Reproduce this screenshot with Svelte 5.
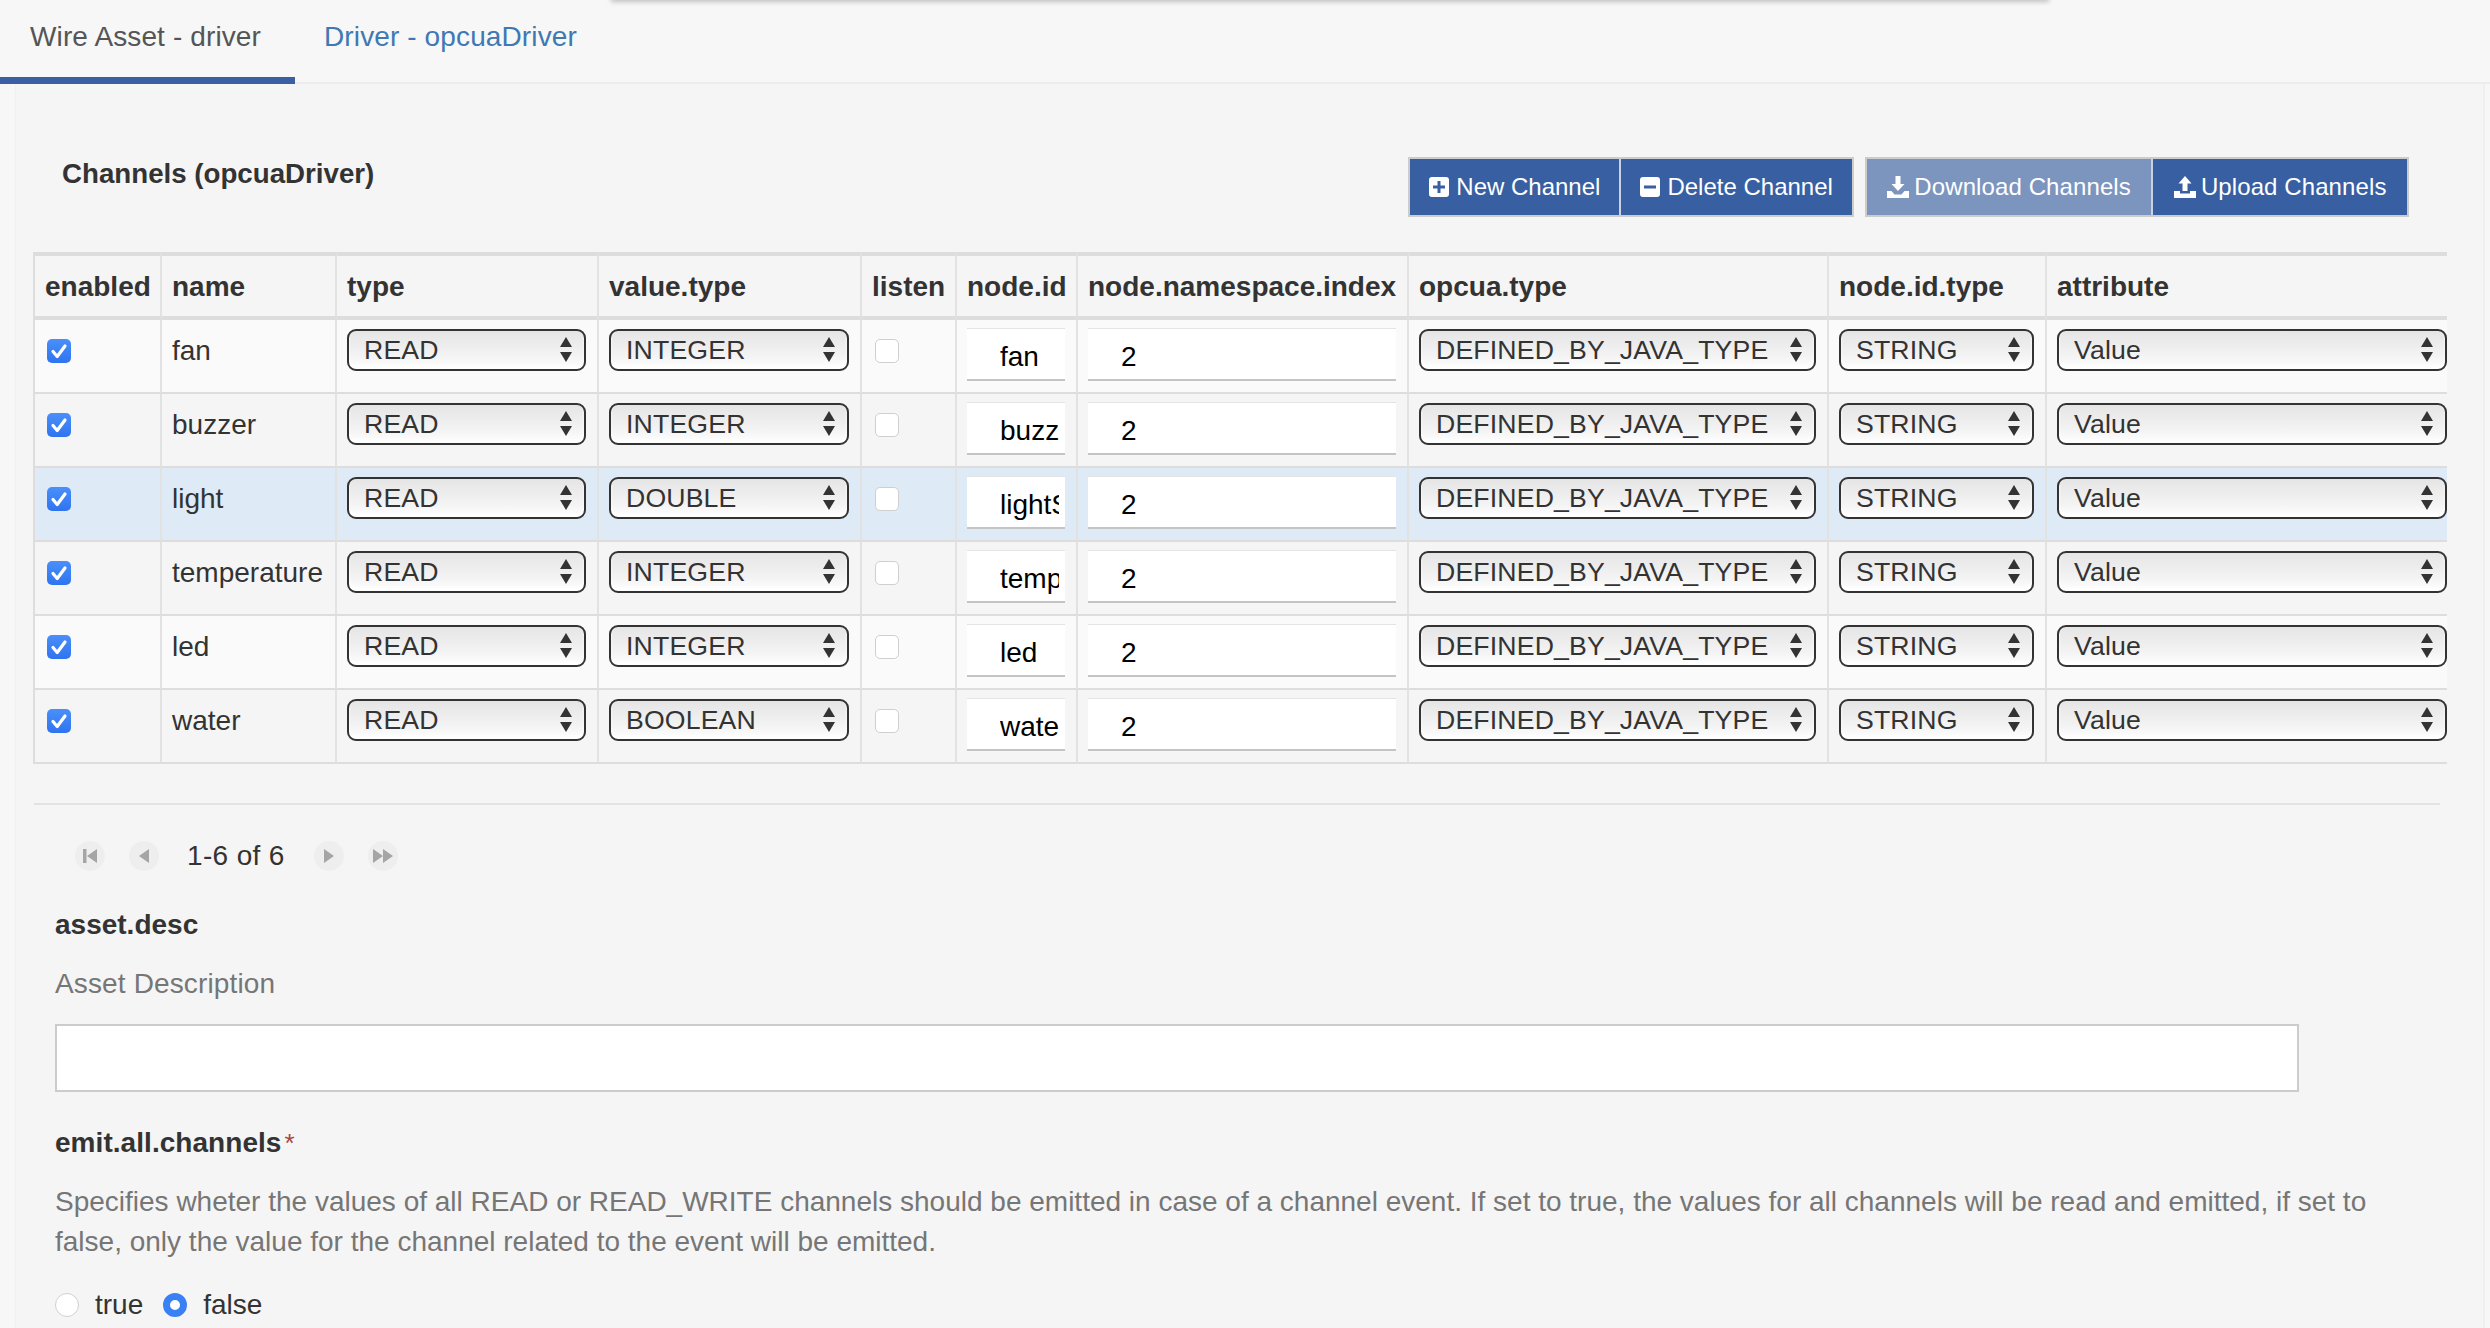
<script lang="ts">
	const columns = ['enabled', 'name', 'type', 'value.type', 'listen', 'node.id', 'node.namespace.index', 'opcua.type', 'node.id.type', 'attribute'];
	const widths = [129, 175, 262, 263, 95, 121, 331, 420, 218, 400];

	const channels = [
		{ name: 'fan', valueType: 'INTEGER', nodeId: 'fan' },
		{ name: 'buzzer', valueType: 'INTEGER', nodeId: 'buzzer' },
		{ name: 'light', valueType: 'DOUBLE', nodeId: 'lightSensor', selected: true },
		{ name: 'temperature', valueType: 'INTEGER', nodeId: 'temperature' },
		{ name: 'led', valueType: 'INTEGER', nodeId: 'led' },
		{ name: 'water', valueType: 'BOOLEAN', nodeId: 'water' }
	];
</script>

{#snippet selectBox(value: string)}
	<div class="select">
		<span>{value}</span>
		<svg class="arrows" viewBox="0 0 14 25" width="14" height="25">
			<path d="M7 0l6 10H1z" />
			<path d="M1 15h12l-6 10z" />
		</svg>
	</div>
{/snippet}

<div class="page">
	<div class="popup-edge"></div>

	<nav class="tabs">
		<div class="tab active">Wire Asset - driver</div>
		<div class="tab">Driver - opcuaDriver</div>
	</nav>

	<main class="panel">
		<div class="toolbar">
			<h2>Channels (opcuaDriver)</h2>
			<div class="actions">
				<div class="btn-group">
					<div class="btn">
						<svg viewBox="0 0 20 20" width="20" height="20"><path fill-rule="evenodd" d="M3 0h14a3 3 0 0 1 3 3v14a3 3 0 0 1-3 3H3a3 3 0 0 1-3-3V3a3 3 0 0 1 3-3zm5.500 4v4.500H4v3h4.500V16h3v-4.500H16v-3h-4.500V4z" /></svg>
						New Channel
					</div>
					<div class="btn">
						<svg viewBox="0 0 20 20" width="20" height="20"><path fill-rule="evenodd" d="M3 0h14a3 3 0 0 1 3 3v14a3 3 0 0 1-3 3H3a3 3 0 0 1-3-3V3a3 3 0 0 1 3-3zM4 8.500v3h12v-3z" /></svg>
						Delete Channel
					</div>
				</div>
				<div class="btn-group">
					<div class="btn file disabled">
						<svg viewBox="0 0 22 22" width="22" height="22"><path d="M8.500 0h5v8h4L11 15 4.500 8h4zM0 15h4.500l3 3.500h7l3-3.500H22v7H0z" /></svg>
						Download Channels
					</div>
					<div class="btn file">
						<svg viewBox="0 0 22 22" width="22" height="22"><path d="M11 0l6.500 7.500h-4V15h-5V7.500h-4zM0 15h6v2.500h10V15h6v7H0z" /></svg>
						Upload Channels
					</div>
				</div>
			</div>
		</div>

		<div class="table-wrap">
			<table>
				<colgroup>
					{#each widths as w}
						<col style="width: {w}px" />
					{/each}
				</colgroup>
				<thead>
					<tr>
						{#each columns as col}
							<th>{col}</th>
						{/each}
					</tr>
				</thead>
				<tbody>
					{#each channels as ch}
						<tr class:selected={ch.selected}>
							<td>
								<span class="check on">
									<svg viewBox="0 0 24 24" width="24" height="24"><path d="M6 12.500l4.200 5L18 7" fill="none" stroke="#fff" stroke-width="3.200" stroke-linecap="round" stroke-linejoin="round" /></svg>
								</span>
							</td>
							<td class="name">{ch.name}</td>
							<td>{@render selectBox('READ')}</td>
							<td>{@render selectBox(ch.valueType)}</td>
							<td class="listen"><span class="check"></span></td>
							<td class="field"><input type="text" value={ch.nodeId} readonly /></td>
							<td class="field"><input type="text" value="2" readonly /></td>
							<td>{@render selectBox('DEFINED_BY_JAVA_TYPE')}</td>
							<td>{@render selectBox('STRING')}</td>
							<td>{@render selectBox('Value')}</td>
						</tr>
					{/each}
				</tbody>
			</table>
		</div>

		<div class="pager">
			<span class="nav">
				<svg viewBox="0 0 14 16" width="14" height="16"><path d="M0 1h3.500v14H0zM14 1v14L4 8z" /></svg>
			</span>
			<span class="nav">
				<svg viewBox="0 0 10 16" width="10" height="16"><path d="M10 1v14L0 8z" /></svg>
			</span>
			<span class="count">1-6 of 6</span>
			<span class="nav">
				<svg viewBox="0 0 10 16" width="10" height="16"><path d="M0 1v14l10-7z" /></svg>
			</span>
			<span class="nav">
				<svg viewBox="0 0 20 16" width="20" height="16"><path d="M0 1v14l10-7zM10 1v14l10-7z" /></svg>
			</span>
		</div>

		<section class="form">
			<div class="label first">asset.desc</div>
			<div class="hint">Asset Description</div>
			<div class="text-box"></div>

			<div class="label second">emit.all.channels<span class="req">*</span></div>
			<p class="hint long">Specifies wheter the values of all READ or READ_WRITE channels should be emitted in case of a channel event. If set to true, the values for all channels will be read and emitted, if set to false, only the value for the channel related to the event will be emitted.</p>

			<div class="radios">
				<span class="radio"></span>
				<span class="radio-label">true</span>
				<span class="radio on"></span>
				<span class="radio-label">false</span>
			</div>
		</section>
	</main>
</div>

<style>
	:global(body) {
		margin: 0;
		background: #f7f7f7;
	}

	.page {
		position: relative;
		display: flex;
		flex-direction: column;
		height: 1328px;
		overflow: hidden;
		font-family: 'Liberation Sans', Arial, sans-serif;
		font-size: 28px;
		line-height: 40px;
		color: #333;
	}

	.popup-edge {
		position: absolute;
		top: -10px;
		left: 611px;
		width: 1438px;
		height: 10px;
		background: #f2f2f2;
		box-shadow: 0 2px 5px rgba(0, 0, 0, 0.22);
	}

	/* Tabs */
	.tabs {
		display: flex;
		height: 82px;
		border-bottom: 2px solid #ececec;
	}

	.tab {
		box-sizing: border-box;
		height: 84px;
		padding: 17px 30px 0 29px;
		color: #3f78b3;
		letter-spacing: 0.12px;
		white-space: nowrap;
	}

	.tab.active {
		width: 295px;
		padding-left: 30px;
		color: #555;
		border-bottom: 7px solid #3a5fa3;
	}

	.panel {
		flex: 1;
		margin: 0 5px 0 15px;
		padding-top: 69px;
		background: #f5f5f5;
		border-left: 1px solid #f1f1f1;
		border-right: 2px solid #efefef;
	}

	/* Title and action buttons */
	.toolbar {
		display: flex;
		justify-content: space-between;
		align-items: flex-start;
		height: 64px;
		padding: 0 74px 0 46px;
		margin-bottom: 35px;
	}

	h2 {
		margin: 1px 0 0;
		font-size: 27.7px;
		line-height: 40px;
		font-weight: 700;
	}

	.actions {
		display: flex;
		gap: 11px;
		margin-top: 4px;
	}

	.btn-group {
		display: flex;
		border: 2px solid #ccc;
		background: #ccc;
	}

	.btn {
		display: flex;
		align-items: center;
		gap: 7px;
		height: 56px;
		padding: 0 19px;
		background: #385fa1;
		color: #fff;
		font-size: 24px;
		white-space: nowrap;
	}

	.btn.file {
		gap: 5px;
		padding: 0 20.500px;
		letter-spacing: 0.1px;
	}

	.btn + .btn {
		border-left: 2px solid #c9d2e2;
	}

	.btn.disabled {
		background: #7b95bf;
	}

	.btn svg {
		fill: #fff;
		flex: none;
	}

	/* Channels table */
	.table-wrap {
		width: 2414px;
		margin-left: 17px;
		overflow: hidden;
	}

	table {
		table-layout: fixed;
		width: 2414px;
		border-collapse: separate;
		border-spacing: 0;
	}

	th {
		box-sizing: border-box;
		height: 68px;
		padding: 2px 10px 0;
		border-top: 4px solid #ddd;
		border-bottom: 4px solid #ddd;
		border-right: 2px solid #e2e2e2;
		text-align: left;
		font-weight: 700;
		white-space: nowrap;
	}

	td {
		box-sizing: border-box;
		height: 74px;
		padding: 8px 11px 0 10px;
		border-bottom: 2px solid #ddd;
		border-right: 2px solid #e2e2e2;
		vertical-align: top;
	}

	th:first-child,
	td:first-child {
		border-left: 2px solid #ddd;
	}

	th:last-child,
	td:last-child {
		border-right: 0;
	}

	td:last-child {
		padding-right: 0;
	}

	tbody tr:nth-child(odd) {
		background: #fafafa;
	}

	tbody tr:nth-child(even) {
		background: #f5f5f5;
	}

	tbody tr.selected {
		background: #deeaf5;
	}

	td.name {
		padding-top: 11px;
		white-space: nowrap;
	}

	.select {
		box-sizing: border-box;
		position: relative;
		display: flex;
		align-items: center;
		height: 42px;
		margin-top: 1px;
		padding-left: 15px;
		border: 2px solid #333;
		border-radius: 9px;
		background: linear-gradient(#e5e5e5, #f3f3f3 65%, #fff);
		box-shadow: inset 0 -3px 3px #fff;
		font-size: 26.67px;
		line-height: 38px;
		letter-spacing: 0.15px;
		white-space: nowrap;
	}

	.arrows {
		position: absolute;
		right: 11px;
		top: 6px;
		fill: #333;
	}

	.check {
		box-sizing: border-box;
		display: block;
		width: 24px;
		height: 24px;
		margin: 11px 0 0 2px;
		border: 1px solid #cfcfcf;
		border-radius: 5px;
		background: #fff;
	}

	.check.on {
		border: 0;
		background: linear-gradient(#4a8ffa, #2f74ef);
	}

	.check svg {
		display: block;
	}

	td.listen .check {
		margin-left: 3px;
	}

	input {
		box-sizing: border-box;
		display: block;
		width: 100%;
		height: 53px;
		padding: 5px 6px 0 33px;
		border: 0;
		border-top: 1px solid #e4e4e4;
		border-bottom: 2px solid #c4c4c4;
		outline: 0;
		background: #fff;
		color: #000;
		font-family: inherit;
		font-size: 28px;
	}

	/* Pagination */
	.pager {
		display: flex;
		align-items: center;
		height: 30px;
		margin-top: 39px;
		margin-right: 43px;
		margin-left: 18px;
		padding: 36px 0 0 41px;
		border-top: 2px solid #e2e2e2;
	}

	.nav {
		display: flex;
		align-items: center;
		justify-content: center;
		width: 30px;
		height: 30px;
		margin-right: 24px;
		border-radius: 50%;
		background: #eee;
	}

	.nav svg {
		fill: #a5a5a5;
	}

	.count {
		margin: 0 29px 0 4px;
		letter-spacing: 0.35px;
		white-space: nowrap;
	}

	/* Form fields below the table */
	.form {
		padding: 0 100px 0 39px;
	}

	.label {
		padding-top: 1px;
		height: 39px;
		font-weight: 700;
	}

	.label.first {
		margin-top: 33px;
	}

	.label.second {
		margin-top: 30px;
		letter-spacing: 0.05px;
	}

	.req {
		margin-left: 3px;
		color: #a94442;
		font-weight: 400;
		font-size: 26px;
	}

	.hint {
		margin: 20px 0 0;
		color: #767676;
		letter-spacing: 0.14px;
	}

	.hint.long {
		width: 2340px;
		letter-spacing: 0;
	}

	.text-box {
		box-sizing: border-box;
		width: 2244px;
		height: 68px;
		margin-top: 20px;
		border: 2px solid #ccc;
		background: #fff;
	}

	.radios {
		display: flex;
		align-items: center;
		height: 24px;
		margin-top: 31px;
	}

	.radio {
		box-sizing: border-box;
		width: 24px;
		height: 24px;
		border: 1px solid #d0d0d0;
		border-radius: 50%;
		background: #fff;
	}

	.radio.on {
		border: 7px solid #3a80f5;
	}

	.radio-label {
		margin: 0 20px 0 16px;
		white-space: nowrap;
	}

	.radio-label:last-child {
		margin-right: 0;
	}
</style>
